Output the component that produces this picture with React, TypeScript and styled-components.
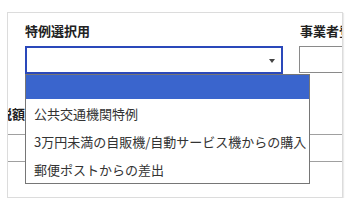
import React from "react";
import styled, { createGlobalStyle } from "styled-components";

const Global = createGlobalStyle`
  html, body { margin: 0; padding: 0; background: #fff; }
  body { font-family: "Noto Sans CJK JP", "Noto Sans", sans-serif; }
`;

const Page = styled.div`
  padding: 12px 0 0 7px;
`;

const Card = styled.div`
  box-sizing: border-box;
  width: 336px;
  height: 186px;
  border: 1px solid #dcdcdc;
  box-shadow: 1px 1px 1px rgba(0, 0, 0, 0.08);
  background: #fff;
  padding: 8px 0 0 17px;
  overflow: hidden;
`;

const FieldRow = styled.div`
  display: grid;
  grid-template-columns: 258px 120px;
  column-gap: 16px;
`;

const Field = styled.div`
  display: flex;
  flex-direction: column;
  gap: 6px;
  position: relative;
`;

const Label = styled.div<{ $nudge?: number }>`
  font-size: 13px;
  line-height: 19px;
  font-weight: 700;
  color: #222;
  white-space: nowrap;
  padding-left: ${(p) => p.$nudge ?? 0}px;
`;

const SelectBox = styled.div`
  box-sizing: border-box;
  height: 28px;
  border: 2px solid #2a48ba;
  background: #fff;
  display: flex;
  align-items: center;
  justify-content: flex-end;
  padding-right: 6px;
`;

const Caret = styled.span`
  width: 0;
  height: 0;
  border-left: 3.5px solid transparent;
  border-right: 3.5px solid transparent;
  border-top: 4px solid #444;
  margin-top: 1px;
`;

const TextInput = styled.div`
  box-sizing: border-box;
  height: 27px;
  border: 1px solid #8a8a8a;
  background: #fff;
`;

const Dropdown = styled.ul`
  position: absolute;
  top: 53px;
  left: 0;
  width: 285px;
  box-sizing: border-box;
  margin: 0;
  padding: 0;
  list-style: none;
  border: 1px solid #767676;
  background: #fff;
  z-index: 2;
`;

const Option = styled.li<{ $active?: boolean; $empty?: boolean }>`
  height: ${(p) => (p.$empty ? 24 : 28)}px;
  display: flex;
  align-items: center;
  padding-left: 8px;
  font-size: 13px;
  color: ${(p) => (p.$active ? "#fff" : "#333")};
  background: ${(p) => (p.$active ? "#3a65cd" : "#fff")};
  white-space: nowrap;
`;

const Section = styled.div`
  margin-top: 30px;
  margin-left: -17px;
`;

const SectionLabel = styled.div`
  margin-left: -36px;
  width: 53px;
  text-align: right;
  font-size: 13px;
  line-height: 19px;
  font-weight: 700;
  color: #222;
  white-space: nowrap;
`;

const Rule = styled.div<{ $h: number }>`
  height: ${(p) => p.$h}px;
  border-bottom: 1px solid #a0a0a0;
`;

export default function App() {
  return (
    <>
      <Global />
      <Page>
        <Card>
          <FieldRow>
            <Field>
              <Label>特例選択用</Label>
              <SelectBox>
                <Caret />
              </SelectBox>
              <Dropdown>
                <Option $active $empty />
                <Option>公共交通機関特例</Option>
                <Option>3万円未満の自販機/自動サービス機からの購入</Option>
                <Option>郵便ポストからの差出</Option>
              </Dropdown>
            </Field>
            <Field>
              <Label $nudge={1}>事業者登録番号</Label>
              <TextInput />
            </Field>
          </FieldRow>
          <Section>
            <SectionLabel>税額</SectionLabel>
            <Rule $h={11} />
            <Rule $h={26} />
          </Section>
        </Card>
      </Page>
    </>
  );
}
